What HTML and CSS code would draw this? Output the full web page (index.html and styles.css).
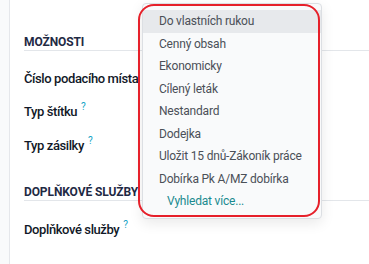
FILE: index.html
```html
<!DOCTYPE html>
<html lang="cs">
<head>
<meta charset="utf-8">
<link rel="stylesheet" href="styles.css">
</head>
<body>
<div class="page">
  <aside class="side"></aside>
  <main class="content">
    <div class="section-title first">MOŽNOSTI</div>
    <div class="field r1">Číslo podacího místa<sup class="help">?</sup></div>
    <div class="field r2">Typ štítku<sup class="help">?</sup></div>
    <div class="field r3">Typ zásilky<sup class="help">?</sup></div>
    <div class="section-title second">DOPLŇKOVÉ SLUŽBY</div>
    <div class="field r4">Doplňkové služby<sup class="help">?</sup></div>
  </main>
  <div class="dropdown">
    <ul class="menu">
      <li class="item active">Do vlastních rukou</li>
      <li class="item">Cenný obsah</li>
      <li class="item">Ekonomicky</li>
      <li class="item">Cílený leták</li>
      <li class="item">Nestandard</li>
      <li class="item">Dodejka</li>
      <li class="item">Uložit 15 dnů-Zákoník práce</li>
      <li class="item">Dobírka Pk A/MZ dobírka</li>
      <li class="item more">Vyhledat více...</li>
    </ul>
  </div>
  <div class="ring"></div>
</div>
</body>
</html>
```
FILE: styles.css
```css
* { box-sizing: border-box; }
html, body { margin: 0; padding: 0; }
body {
  width: 369px;
  height: 264px;
  overflow: hidden;
  background: #fff;
  font-family: Roboto, "Noto Sans", sans-serif;
}
.page {
  position: relative;
  display: flex;
  height: 264px;
}
.side {
  width: 10px;
  flex: none;
  background: #f9fafb;
  border-right: 1px solid #e5e7eb;
}
.content {
  flex: 1;
  padding-left: 14px;
  display: flex;
  flex-direction: column;
}
.section-title {
  font-size: 12px;
  font-weight: 700;
  color: #1f2a44;
  line-height: 16px;
  height: 17px;
  border-bottom: 1px solid #e3e6ea;
  letter-spacing: -0.1px;
}
.section-title.first { margin-top: 34px; }
.section-title.second { margin-top: 28px; }
.field {
  font-size: 13px;
  font-weight: 500;
  color: #111827;
  line-height: 20px;
  height: 20px;
  letter-spacing: -0.4px;
}
.r1 { margin-top: 18px; }
.r2 { margin-top: 13px; }
.r3 { margin-top: 14px; }
.r4 { margin-top: 19px; }
.help {
  color: #12a3c4;
  font-size: 10px;
  font-weight: 400;
  margin-left: 4px;
  vertical-align: 6px;
  line-height: 0;
}
.dropdown {
  position: absolute;
  left: 142px;
  top: 3px;
  width: 180px;
  height: 216px;
  background: #f9fafb;
  border: 1px solid #dcdfe3;
  border-radius: 4px;
  box-shadow: 0 4px 14px rgba(0, 0, 0, 0.09);
}
.menu {
  list-style: none;
  margin: 0;
  padding: 6px 0 0 0;
}
.item {
  height: 22.5px;
  line-height: 22.5px;
  padding-left: 16px;
  font-size: 12px;
  letter-spacing: -0.2px;
  color: #4b5058;
  white-space: nowrap;
}
.item.active { background: #e7e9ec; }
.item.more { color: #1b8a8f; padding-left: 24px; }
.ring {
  position: absolute;
  left: 138px;
  top: 4px;
  width: 182px;
  height: 213px;
  border: 2px solid #e6202a;
  border-radius: 16px;
}
```
